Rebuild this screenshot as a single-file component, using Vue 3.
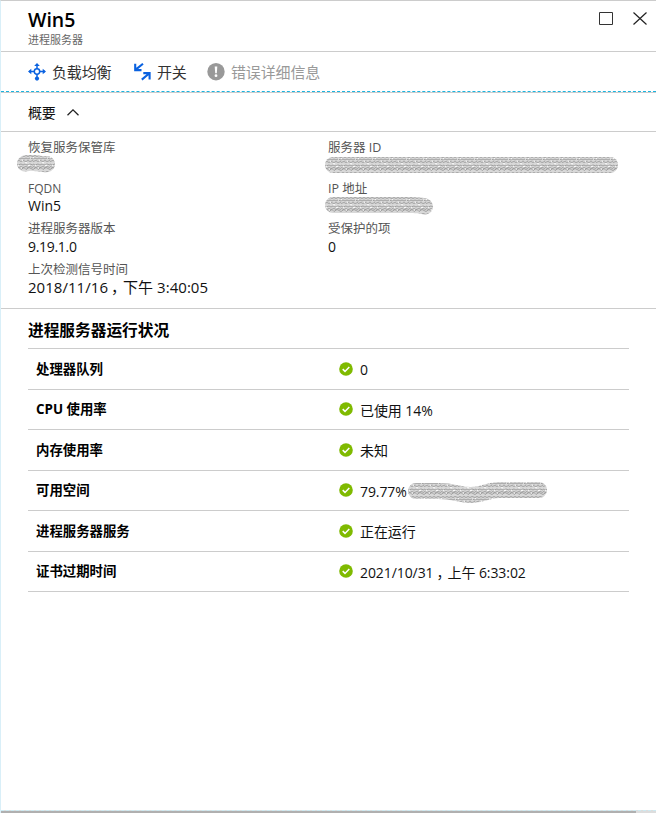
<script setup>
const health = [
  { name: '处理器队列', value: '0' },
  { name: 'CPU 使用率', value: '已使用 14%' },
  { name: '内存使用率', value: '未知' },
  { name: '可用空间', value: '79.77%', masked: true },
  { name: '进程服务器服务', value: '正在运行' },
  { name: '证书过期时间', value: '2021/10/31', tail: '上午 6:33:02' },
]
</script>

<template>
  <main class="blade">
    <svg class="defs" width="0" height="0" aria-hidden="true">
      <defs>
        <pattern id="scribble" width="17" height="16" patternUnits="userSpaceOnUse">
          <rect width="17" height="16" fill="#d8d8d8" />
          <path d="M0 1.5l2-1 2 1 2-1 2 1 2-1 2 1 2-1 3 1M0 4l2-1 2 1 2-1 2 1 2-1 2 1 2-1 3 1M0 6.5l3-1 2 1 2-1 3 1 2-1 2 1 3-1M0 9l2 1 3-1 2 1 2-1 2 1 3-1 3 1M0 11.5l3 1 2-1 2 1 3-1 2 1 2-1 3 1M0 14.5l3-2 2 2 3-2 2 2 3-2 4 2" fill="none" stroke="#9a9a9a" stroke-width=".9" />
          <path d="M0 2.7h1M6 5.3h1M9 7.8h2M2 10.3h1M12 10.3h2M5 13h1M14 3h1" stroke="#fff" />
        </pattern>
      </defs>
    </svg>
    <header class="header">
      <div>
        <h1>Win5</h1>
        <p>进程服务器</p>
      </div>
      <div class="window-actions">
        <svg width="14" height="14" viewBox="0 0 14 14"><path d="M.5 .5h13v12H.5z" fill="none" stroke="#333" /></svg>
        <svg width="14" height="14" viewBox="0 0 14 14"><path d="M.5 .5l13 12M13.5 .5l-13 12" fill="none" stroke="#222" stroke-width="1.2" /></svg>
      </div>
    </header>
    <nav class="toolbar">
      <button class="balance">
        <svg width="18" height="18" viewBox="0 0 18 18">
          <g fill="none" stroke="#0a62e0" stroke-width="1.5"><circle cx="9" cy="8.5" r="2.7" /><path d="M9 1v5M9 11v5M1 8.5h5.3M11.7 8.5H17" /></g>
          <path d="M9 0l2.8 3H6.2zM0 8.5l3.3-2.8v5.6zM18 8.5l-3.3-2.8v5.6z" fill="#0a62e0" /><circle cx="9" cy="15.6" r="2.1" fill="#0a62e0" />
        </svg><span>负载均衡</span>
      </button>
      <button class="switch">
        <svg width="17" height="18" viewBox="0 0 17 18"><path d="M9 .8L2 6.4M1.2 .8v6.3h6.3M7.8 16.6l7-5.8M9.3 10.1h6.3v6.3" fill="none" stroke="#0a62e0" stroke-width="2.1" /></svg><span>开关</span>
      </button>
      <button class="error">
        <svg width="18" height="18" viewBox="0 0 18 18"><circle cx="9" cy="8.7" r="8.7" fill="#999" /><path d="M7.7 3.5h2.6l-.5 6.7H8.2z" fill="#fff" /><circle cx="9" cy="12.7" r="1.4" fill="#fff" /></svg><span>错误详细信息</span>
      </button>
    </nav>
    <div class="summary-toggle"><span>概要</span><svg width="12" height="7" viewBox="0 0 12 7"><path d="M.5 6.2L6 .9l5.5 5.3" fill="none" stroke="#222" stroke-width="1.3" /></svg></div>
    <section class="essentials">
      <dl>
        <div><dt>恢复服务保管库</dt><dd><svg class="mask vault" width="40" height="18" viewBox="0 0 40 18"><path d="M9 8.5C18 6 23 10 31 9" class="scrawl" /></svg></dd></div>
        <div><dt class="latin">FQDN</dt><dd>Win5</dd></div>
        <div><dt>进程服务器版本</dt><dd class="version">9.19.1.0</dd></div>
        <div><dt>上次检测信号时间</dt><dd class="heartbeat">2018/11/16<span class="comma">，</span>下午 3:40:05</dd></div>
      </dl>
      <dl>
        <div><dt>服务器 ID</dt><dd><svg class="mask" width="296" height="18" viewBox="0 0 296 18"><path d="M9 9H286" class="scrawl" /></svg></dd></div>
        <div><dt>IP 地址</dt><dd><svg class="mask" width="112" height="20" viewBox="0 0 112 20"><path d="M9 8H88Q96 8 101 9.5" class="scrawl" /></svg></dd></div>
        <div><dt>受保护的项</dt><dd class="version">0</dd></div>
      </dl>
    </section>
    <section class="health">
      <h2>进程服务器运行状况</h2>
      <ul>
        <li v-for="item in health" :key="item.name">
          <strong>{{ item.name }}</strong>
          <svg class="ok" width="14" height="14" viewBox="0 0 14 14"><circle cx="7" cy="7" r="6.8" fill="#7fba00" /><path d="M3.7 7.1l2.3 2.3 4.3-4.5" fill="none" stroke="#fff" stroke-width="1.5" /></svg>
          <span class="value">{{ item.value }}<template v-if="item.tail"><span class="comma">，</span>{{ item.tail }}</template></span>
          <svg v-if="item.masked" class="space-mask" width="142" height="24" viewBox="0 0 142 24"><path d="M9 11H31C49 11 51 15 64 15S80 10 92 10H132" class="scrawl" /></svg>
        </li>
      </ul>
    </section>
    <footer><i></i></footer>
  </main>
</template>

<style>
body { margin: 0; background: #fff; }
</style>
<style scoped>
* { box-sizing: border-box; }
.blade { width: 656px; height: 813px; display: flex; flex-direction: column; border-left: 1px solid #d9eff8; border-top: 1px solid #ccc; font: 14px/18px "Open Sans", "Noto Sans CJK SC", sans-serif; color: #111; overflow: hidden; white-space: nowrap; }
.defs { position: absolute; }
h1, h2, p, dl, dd, ul { margin: 0; padding: 0; }
svg { display: block; flex-shrink: 0; }
.header { height: 51px; border-bottom: 1px solid #ccc; display: flex; justify-content: space-between; padding: 8px 9px 0 27px; }
h1 { font-size: 19.5px; line-height: 22px; font-weight: 600; color: #000; }
.header p { font-size: 11px; line-height: 15px; color: #666; margin-top: 1px; }
.window-actions { display: flex; gap: 20px; padding-top: 3px; }
.toolbar { height: 40px; display: flex; align-items: center; padding: 1px 0 0 27px; border-bottom: 1px dashed #1bb4df; }
button { border: 0; padding: 0; background: none; display: flex; align-items: center; font: inherit; font-size: 15px; letter-spacing: -.15px; color: #333; }
.balance { width: 106px; gap: 6px; }
.switch { width: 73px; gap: 6px; }
.error { gap: 6px; color: #999; }
.summary-toggle { height: 40px; border-top: 1px solid #ccc; border-bottom: 1px solid #ccc; padding: 1px 0 0 27px; display: flex; align-items: center; gap: 12px; letter-spacing: -.3px; }
.essentials { height: 177px; border-bottom: 1px solid #ccc; display: grid; grid-template-columns: 300px 300px; padding: 7px 0 0 27px; }
dl > div { height: 40.6px; }
dt { font-size: 12.5px; color: #555; line-height: 18px; }
.latin { font-size: 12px; }
dd { line-height: 16px; }
.version { line-height: 18px; letter-spacing: -.3px; }
.heartbeat { font-size: 15px; letter-spacing: .04px; }
.comma { padding-left: 3px; letter-spacing: -3px; }
.mask { margin-left: -4px; margin-top: -1px; }
.vault { margin-left: -12px; margin-top: -2px; }
.scrawl { fill: none; stroke: url(#scribble); stroke-width: 16px; stroke-linecap: round; }
.health { padding: 0 27px; flex: 1; }
h2 { height: 40px; line-height: 43px; font-size: 15.7px; font-weight: 600; border-bottom: 1px solid #ccc; color: #000; }
ul { list-style: none; }
li { height: 40.5px; border-bottom: 1px solid #ccc; display: flex; align-items: center; padding-left: 8px; }
strong { width: 303px; font-size: 13.4px; font-weight: 700; color: #000; }
.ok { margin-right: 7px; }
.value { padding-top: 3px; letter-spacing: -.08px; }
.space-mask { margin-top: 3px; }
footer { height: 3px; border-top: 1px dashed #cdeaf2; background: #ddd; }
footer i { display: block; height: 2px; width: 635px; background: #b0b0b0; }
</style>
